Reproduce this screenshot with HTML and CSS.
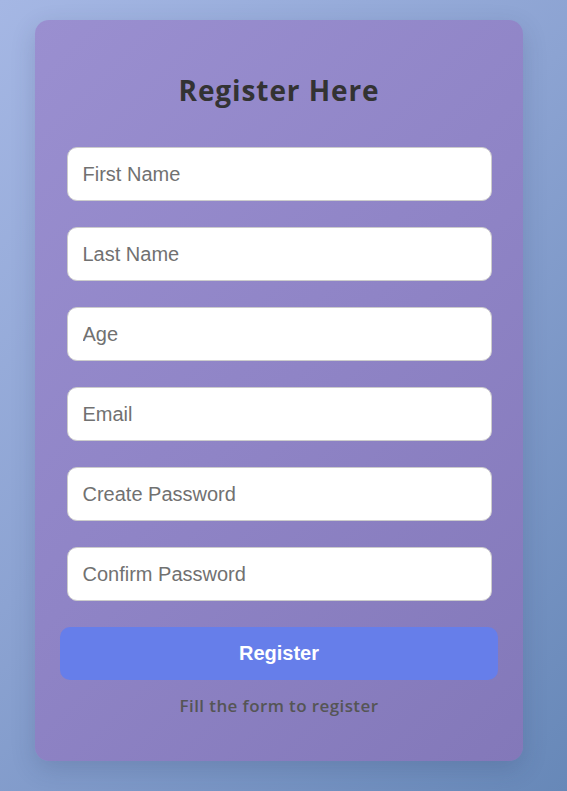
FILE: index.html
```html
<!DOCTYPE html>
<html lang="en">
<head>
<meta charset="utf-8">
<title>Register Here</title>
<link rel="stylesheet" href="styles.css">
</head>
<body>
<main class="page">
  <form class="card">
    <h2 class="title">Register Here</h2>
    <input class="field" type="text" placeholder="First Name">
    <input class="field" type="text" placeholder="Last Name">
    <input class="field" type="text" placeholder="Age">
    <input class="field" type="text" placeholder="Email">
    <input class="field" type="password" placeholder="Create Password">
    <input class="field" type="password" placeholder="Confirm Password">
    <button class="submit" type="button">Register</button>
    <p class="note">Fill the form to register</p>
  </form>
</main>
</body>
</html>
```
FILE: styles.css
```css
html, body {
  margin: 0;
  padding: 0;
}
body {
  min-height: 100vh;
  background: linear-gradient(135deg, #a5b7e4 0%, #8ca3d2 45%, #6788b8 100%);
  font-family: "Liberation Sans", Arial, sans-serif;
}
.page {
  display: flex;
  align-items: flex-start;
  padding: 20px 0 0 35px;
  min-height: 100vh;
  box-sizing: border-box;
}
.card {
  width: 488px;
  box-sizing: border-box;
  padding: 49px 25px 43px;
  border-radius: 14px;
  background: linear-gradient(135deg, #9a8fd0 0%, #8f84c6 50%, #8378b9 100%);
  box-shadow: 0 8px 24px rgba(40, 50, 90, 0.18);
  display: flex;
  flex-direction: column;
  align-items: center;
}
.title {
  margin: 0 0 36px;
  font-family: "Open Sans", sans-serif;
  font-weight: 700;
  font-size: 28px;
  line-height: 42px;
  color: #333333;
  letter-spacing: 0.9px;
}
.field {
  width: 425px;
  height: 54px;
  box-sizing: border-box;
  margin: 0 0 26px;
  padding: 0 15px;
  border: 1px solid #cccccc;
  border-radius: 10px;
  background: #ffffff;
  font-family: "Liberation Sans", Arial, sans-serif;
  font-size: 20px;
  color: #333;
  outline: none;
}
.field::placeholder {
  color: #717171;
}
.submit {
  width: 100%;
  height: 53px;
  border: none;
  border-radius: 10px;
  background: #667eea;
  color: #ffffff;
  font-family: "Liberation Sans", Arial, sans-serif;
  font-weight: 700;
  font-size: 20px;
  cursor: pointer;
}
.note {
  margin: 14px 0 0;
  font-family: "Open Sans", sans-serif;
  font-weight: 600;
  font-size: 17px;
  line-height: 24px;
  color: #555555;
  letter-spacing: 0.4px;
}
```
